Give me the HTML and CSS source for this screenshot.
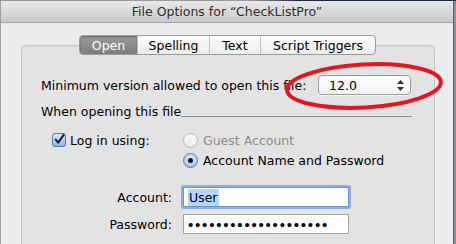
FILE: index.html
```html
<!DOCTYPE html>
<html lang="en">
<head>
  <meta charset="UTF-8">
  <title>File Options</title>
  <link rel="stylesheet" href="styles.css">
</head>
<body>

<div class="desk"></div>
<div class="window">
  <div class="titlebar">File Options for “CheckListPro”</div>

  <div class="content">
    <div class="tabs">
      <span class="tab active">Open</span>
      <span class="tab">Spelling</span>
      <span class="tab">Text</span>
      <span class="tab">Script Triggers</span>
    </div>

    <div class="tabbox">
      <div class="version">
        <span>Minimum version allowed to open this file:</span>
        <div class="popup">
          <span>12.0</span>
          <svg class="arrows" width="7" height="11" viewBox="0 0 7 11">
            <path d="M3.5 0 L7 4 L0 4 Z" fill="#333"/>
            <path d="M3.5 11 L7 7 L0 7 Z" fill="#333"/>
          </svg>
        </div>
      </div>

      <div class="section">
        <span>When opening this file</span>
        <div class="rule"></div>
      </div>

      <div class="login">
        <div class="check">
          <span class="checkbox">
            <svg width="13" height="13" viewBox="0 0 13 13">
              <path d="M3 6.5 L5.6 10 L11.5 1.5" fill="none" stroke="#1a1a1a" stroke-width="2.2" stroke-linecap="round" stroke-linejoin="round"/>
            </svg>
          </span>
          Log in using:
        </div>
        <div class="radios">
          <div class="radio-row disabled"><span class="radio"></span>Guest Account</div>
          <div class="radio-row"><span class="radio on"></span>Account Name and Password</div>
        </div>
      </div>

      <div class="field-row">
        <span class="field-label">Account:</span>
        <div class="field focus"><span class="sel">User</span></div>
      </div>
      <div class="field-row">
        <span class="field-label">Password:</span>
        <div class="field dots">••••••••••••••••••••</div>
      </div>
    </div>
  </div>

  <!-- red annotation drawn over the dialog -->
  <svg class="mark" width="170" height="60" viewBox="0 0 170 60">
    <ellipse cx="85" cy="30" rx="77" ry="21.5" fill="none" stroke="#e4161f" stroke-width="4" transform="rotate(-3 85 30)"/>
  </svg>
</div>

</body>
</html>
```

FILE: styles.css
```css
* {
  margin: 0;
  padding: 0;
  box-sizing: border-box;
}

html, body {
  width: 456px;
  height: 244px;
  overflow: hidden;
  background: #8e9097;
  font-family: "DejaVu Sans", "Liberation Sans", sans-serif;
  font-size: 12.5px;
  color: #000;
}

.desk {
  height: 1px;
  background: linear-gradient(to right, #9a9a9a 0, #9a9a9a 55%, #1f2a40 65%, #1f2a40 100%);
}

.window {
  position: relative;
  width: 454px;
  height: 243px;
  background: #ececec;
  border-left: 1px solid #9c9c9c;
  border-right: 1px solid #5f6168;
  overflow: hidden;
}

.titlebar {
  height: 22px;
  line-height: 21px;
  text-align: center;
  color: #2e2e2e;
  background: linear-gradient(#e9e9e9, #c9c9c9);
  border-bottom: 1px solid #a2a2a2;
  border-top-right-radius: 4px;
}

.content {
  padding: 12px 18px 0 20px;
}

.tabs {
  position: relative;
  z-index: 1;
  display: flex;
  width: 297px;
  height: 20px;
  margin: 0 auto 0 58px;
  border: 1px solid #9a9a9a;
  border-radius: 4px;
  background: linear-gradient(#fdfdfd, #ececec);
  overflow: hidden;
}

.tab {
  display: flex;
  align-items: center;
  justify-content: center;
  border-left: 1px solid #c2c2c2;
}

.tab:nth-child(1) { width: 57px; border-left: none; }
.tab:nth-child(2) { width: 72px; }
.tab:nth-child(3) { width: 51px; }
.tab:nth-child(4) { flex: 1; }

.tab.active {
  color: #fff;
  background: linear-gradient(#9a9a9a, #7d7d7d);
  box-shadow: inset 0 1px 2px rgba(0, 0, 0, 0.35);
}

.tabbox {
  width: 414px;
  height: 220px;
  margin-top: -10px;
  padding: 29px 0 0 19px;
  background: #e3e3e3;
  border: 1px solid #c4c4c4;
  border-radius: 4px;
  box-shadow: inset 0 1px 1px rgba(0, 0, 0, 0.06);
}

.version {
  display: flex;
  align-items: center;
  justify-content: space-between;
  padding-right: 23px;
  height: 20px;
}

.popup {
  display: flex;
  align-items: center;
  justify-content: space-between;
  width: 93px;
  height: 20px;
  padding: 0 6px 0 10px;
  background: linear-gradient(#ffffff, #f1f1f1);
  border: 1px solid #9d9d9d;
  border-radius: 4px;
  box-shadow: 0 1px 0 rgba(255, 255, 255, 0.6);
}

.section {
  display: flex;
  align-items: flex-end;
  height: 14px;
  margin-top: 10px;
  padding-right: 22px;
}

.rule {
  flex: 1;
  height: 1px;
  margin-bottom: 2px;
  background: #8c8c8c;
}

.login {
  display: flex;
  margin-top: 11px;
}

.check {
  display: flex;
  align-items: center;
  gap: 4px;
  width: 142px;
  height: 20px;
  padding-left: 11px;
}

.checkbox {
  display: flex;
  width: 14px;
  height: 14px;
  border: 1px solid #5b7aa8;
  border-radius: 3px;
  background: linear-gradient(#d8e9fb, #8db6e6);
}

.checkbox svg {
  margin: -1px 0 0 0;
}

.radio-row {
  display: flex;
  align-items: center;
  gap: 5px;
  height: 20px;
}

.radio-row.disabled {
  color: #8c8c8c;
}

.radio {
  display: flex;
  align-items: center;
  justify-content: center;
  width: 15px;
  height: 15px;
  border-radius: 50%;
  border: 1px solid #b8b8b8;
  background: linear-gradient(#fafafa, #ececec);
}

.radio.on {
  border-color: #557aae;
  background: radial-gradient(circle at 50% 35%, #eaf3fc, #a7c8ee 70%, #7aa7dc);
}

.radio.on::after {
  content: "";
  width: 5px;
  height: 5px;
  border-radius: 50%;
  background: #111;
}

.field-row {
  display: flex;
  align-items: center;
  gap: 11px;
  margin-top: 7px;
}

.login + .field-row {
  margin-top: 17px;
}

.field-label {
  width: 131px;
  text-align: right;
}

.field {
  display: flex;
  align-items: center;
  width: 166px;
  height: 20px;
  padding-left: 4px;
  background: #fff;
  border: 1px solid #a3a3a3;
}

.field.focus {
  border-color: #6d95c9;
  box-shadow: 0 0 0 2px rgba(110, 160, 225, 0.75);
  border-radius: 1px;
}

.sel {
  background: #b5d5fd;
  padding: 1px 1px;
}

.dots {
  font-family: "Liberation Sans", sans-serif;
  font-size: 15px;
  letter-spacing: 1.8px;
}

.mark {
  position: absolute;
  left: 278px;
  top: 55px;
}
```
